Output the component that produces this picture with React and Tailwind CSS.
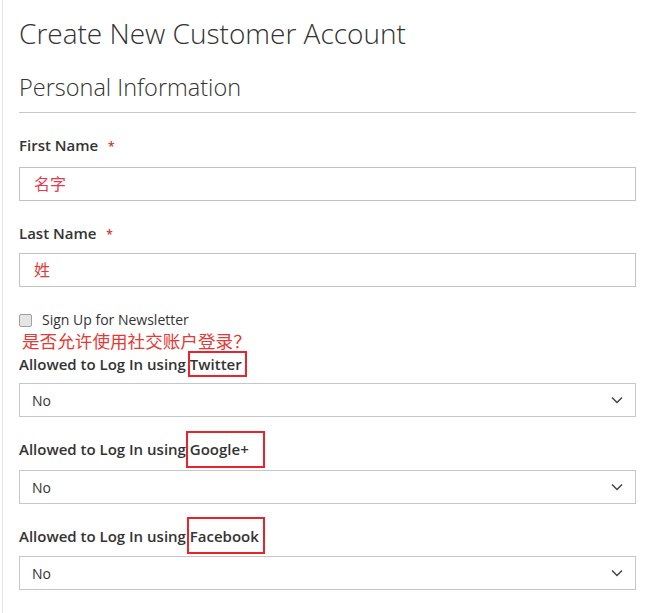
import React from "react"

const font = { fontFamily: '"Open Sans", "Noto Sans CJK SC", sans-serif' }

const Chevron = () => (
  <svg width="12" height="8" viewBox="0 0 12 8" fill="none" className="mr-[12px]">
    <polyline points="1,1.5 6,6.5 11,1.5" stroke="#444" strokeWidth="1.5" />
  </svg>
)

// red annotation box drawn over the word
const Boxed = ({ children, box }) => (
  <span className="relative">
    {children}
    <span className={"absolute border-2 border-[#e8232b] " + box} />
  </span>
)

const SelectNo = ({ className }) => (
  <div className={"flex h-[34px] w-full items-center justify-between border border-[#c6c6c6] bg-white pl-[12px] text-[14px] text-[#333] " + className}>
    <span>No</span>
    <Chevron />
  </div>
)

const App = () => {
  return (
    <div className="min-h-[613px] bg-white" style={font}>
      <div className="ml-[2px] min-h-[613px] border-l border-[#e6e6e6] pl-[16px] pr-[14px] pt-[16px]">
        <h1 className="text-[28px] font-light leading-[34px] text-[#333]">Create New Customer Account</h1>

        <div className="mt-[22px] border-b border-[#c8c8c8] pb-[10px]">
          <h2 className="text-[23.5px] font-light leading-[30px] text-[#333]">Personal Information</h2>
        </div>

        <div className="mt-[22px]">
          <label className="block text-[15px] font-semibold leading-[20px] text-[#333]">
            First Name <span className="ml-[6px] text-[12px] text-[#e02b27]">*</span>
          </label>
          <div className="mt-[10px] flex h-[34px] items-center border border-[#c2c2c2] pl-[14px] text-[16px] text-[#e8384f]">名字</div>
        </div>

        <div className="mt-[22px]">
          <label className="block text-[15px] font-semibold leading-[20px] text-[#333]">
            Last Name <span className="ml-[6px] text-[12px] text-[#e02b27]">*</span>
          </label>
          <div className="mt-[8px] flex h-[34px] items-center border border-[#c2c2c2] pl-[14px] text-[16px] text-[#e53935]">姓</div>
        </div>

        <div className="mt-[23px] flex h-[20px] items-center">
          <input type="checkbox" className="m-0 h-[13px] w-[13px] appearance-none rounded-[2px] border border-[#a0a0a0] bg-[#e4e4e4]" />
          <span className="ml-[10px] text-[14px] leading-[20px] text-[#333]">Sign Up for Newsletter</span>
        </div>
        <div className="pl-[3px] text-[17.6px] leading-[22px] text-[#e53935]" style={{ fontFamily: '"Noto Sans CJK SC", sans-serif' }}>
          是否允许使用社交账户登录？
        </div>

        <div className="mt-[2px]">
          <div className="text-[15px] font-semibold leading-[20px] text-[#333]">
            Allowed to Log In using <Boxed box="-left-[2px] w-[59px] -top-[3px] -bottom-[3px]">Twitter</Boxed>
          </div>
          <SelectNo className="mt-[9px]" />
        </div>

        <div className="mt-[22px]">
          <div className="text-[15px] font-semibold leading-[20px] text-[#333]">
            Allowed to Log In using <Boxed box="-left-[4px] w-[79px] -top-[8px] -bottom-[9px]">Google+</Boxed>
          </div>
          <SelectNo className="mt-[11px]" />
        </div>

        <div className="mt-[22px]">
          <div className="text-[15px] font-semibold leading-[20px] text-[#333]">
            Allowed to Log In using <Boxed box="-left-[3px] w-[78px] -top-[9px] -bottom-[8px]">Facebook</Boxed>
          </div>
          <SelectNo className="mt-[10px]" />
        </div>
      </div>
    </div>
  )
}

export default App
